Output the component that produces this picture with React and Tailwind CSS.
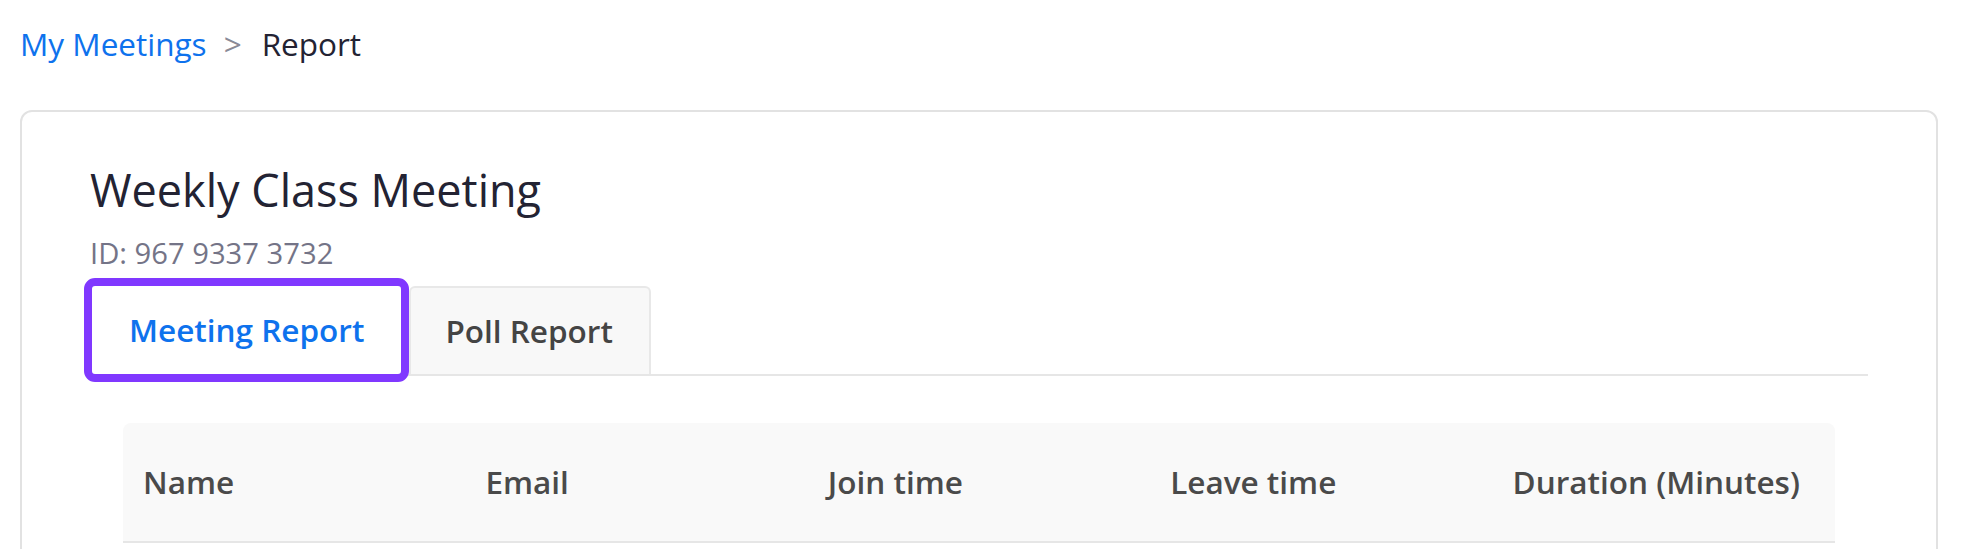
const COLUMNS = ["Name", "Email", "Join time", "Leave time", "Duration (Minutes)"];

export default function App() {
  return (
    <div className="min-h-screen bg-white pl-5 pr-[26px] font-['Open_Sans',sans-serif]">
      <nav className="flex items-center pt-[20px] text-[31.5px] leading-[1.5]">
        <a className="text-[#0e72ed]">My Meetings</a>
        <span className="ml-[17px] mr-[20px] text-[#8a8a96]">&gt;</span>
        <span className="text-[#232333]">Report</span>
      </nav>
      <div className="mt-[43px] rounded-xl border-2 border-[#e2e2e2] bg-white px-[68px] pt-[44px] pb-10">
        <h1 className="text-[45px] leading-[1.5] font-normal text-[#232333]">
          Weekly Class Meeting
        </h1>
        <p className="mt-[8px] text-[29.2px] leading-[1.5] text-[#747487]">
          ID: 967 9337 3732
        </p>
        <div className="mt-[10px] flex items-end border-b-2 border-[#e6e6e6]">
          <button className="ml-0.5 h-[88px] rounded-[3px] bg-white px-[37px] text-[31.5px] font-semibold text-[#0e72ed] outline-8 outline-[#8038ff]">
            Meeting Report
          </button>
          <button className="ml-2 h-[88px] rounded-t-md border-2 border-b-0 border-[#e8e8e8] bg-[#f8f8f8] pl-[34px] pr-[36px] text-[31.5px] font-semibold text-[#444444]">
            Poll Report
          </button>
        </div>
        <div className="mx-[33px] mt-[47px]">
          <table className="w-full table-fixed border-collapse">
            <thead>
              <tr className="border-b-2 border-[#e6e6e6] bg-[#f9f9f9]">
                {COLUMNS.map((col, i) => (
                  <th
                    key={col}
                    className={
                      "h-[119px] px-5 text-left text-[31.5px] font-semibold text-[#4a4a4a] " +
                      (i === 0 ? "rounded-tl-lg" : i === COLUMNS.length - 1 ? "rounded-tr-lg" : "")
                    }
                  >
                    {col}
                  </th>
                ))}
              </tr>
            </thead>
          </table>
        </div>
      </div>
    </div>
  );
}
